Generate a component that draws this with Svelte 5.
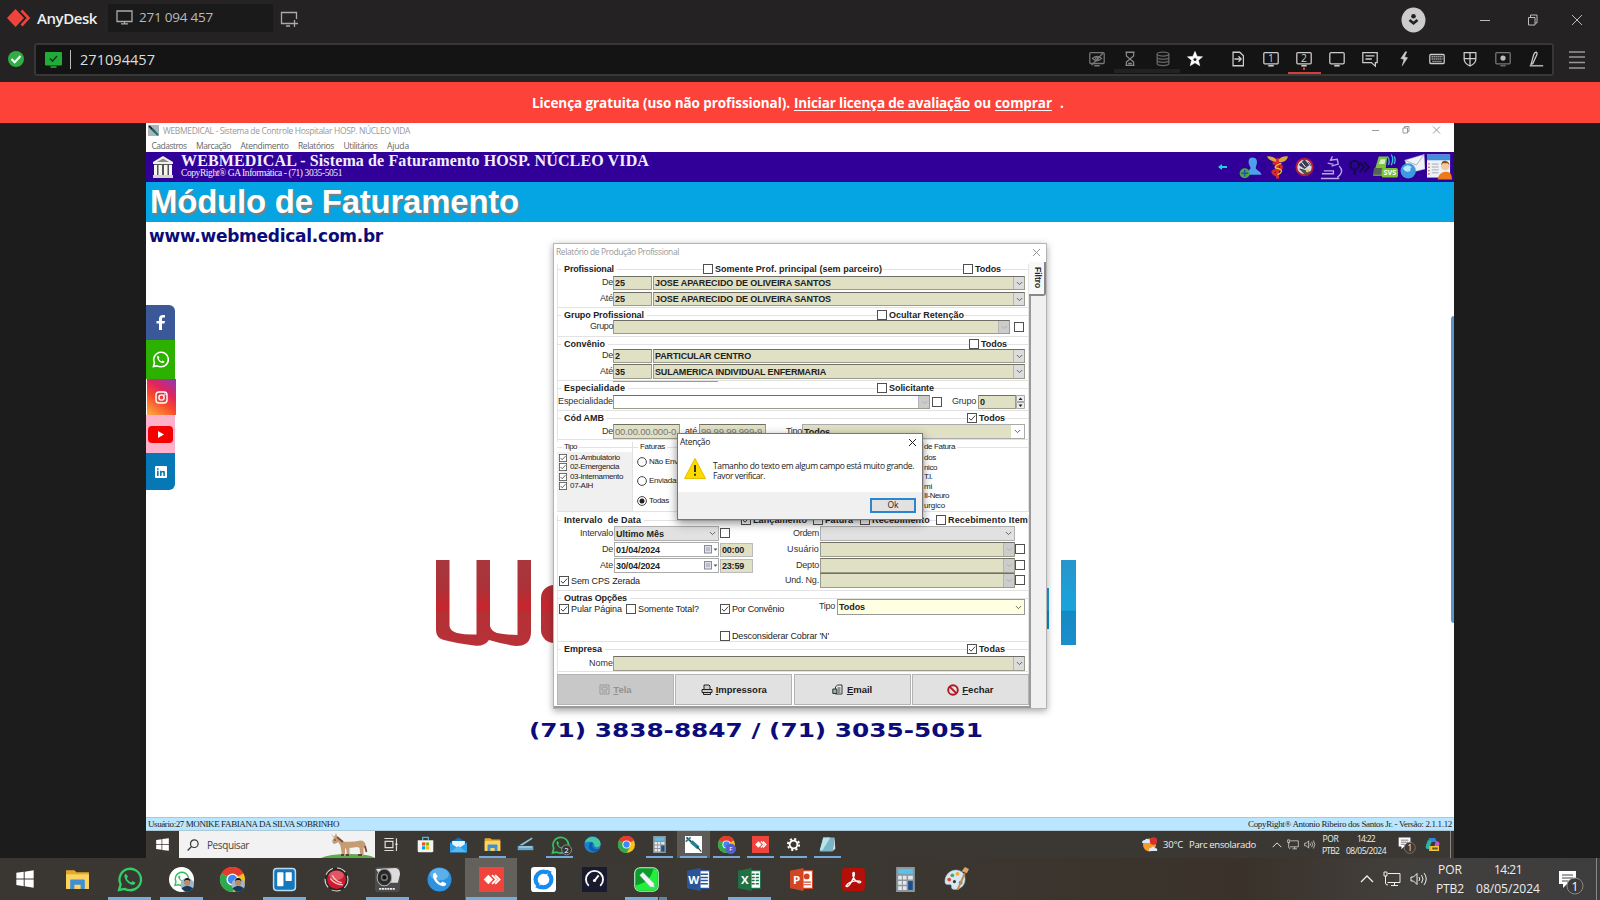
<script>
  // Spreads the letters of a label so that it takes the given width.
  function fit(node, width) {
    if (!width) return;
    const natural = node.getBoundingClientRect().width;
    const count = [...node.textContent].length;
    node.style.letterSpacing = `${(width - natural) / count}px`;
  }

  const menu = [
    ['Cadastros', 35], ['Marcação', 35], ['Atendimento', 48],
    ['Relatórios', 36], ['Utilitários', 34], ['Ajuda', 22]
  ];
  const toolsLeft = ['hidden', 'hourglass', 'disks', 'star'];
  const toolsRight = ['file', 'one', 'two', 'blank', 'chat', 'bolt', 'keyboard', 'shield', 'record', 'pen'];
  const remoteApps = [
    ['taskview', ''], ['store', ''], ['mail', ''], ['folder', 'run'], ['scanner', ''], ['whatsapp2', 'run'],
    ['edge', ''], ['chrome', ''], ['calc', 'run'], ['syringe', 'run active'], ['chromeF', 'run'],
    ['anydesk', 'run'], ['gear', 'run'], ['notes', 'run']
  ];
  const hostApps = [
    ['windows', ''], ['folder', ''], ['whatsapp', 'run'], ['waweb', 'run'], ['chromeP', ''], ['trello', 'run'],
    ['redball', ''], ['camera', 'run'], ['phone', ''], ['anydesk', 'run active'], ['sync', ''], ['gauge', ''],
    ['corel', 'run'], ['word', ''], ['excel', 'run'], ['ppt', ''], ['pdf', ''], ['calc', ''], ['paint', '']
  ];
  const tipos = [['01-Ambulatorio', 50], ['02-Emergencia', 49], ['03-Internamento', 53], ['07-AIH', 23]];
  const faturas = [['Não Enviadas', 47], ['Enviadas', 31], ['Todas', 20]];
  const faturaKinds = [['dos', 12], ['nico', 13], ['T.I.', 8], ['mi', 8], ['II-Neuro', 25], ['urgico', 21]];
</script>

{#snippet t(text, w = 0, cls = '')}<span class="t {cls}" use:fit={w}>{text}</span>{/snippet}

{#snippet box(on = false, cls = '')}
  <svg class="box {cls}" viewBox="0 0 10 10"><rect x=".5" y=".5" width="9" height="9" fill="#fff" stroke="#505050" />{#if on}<path d="M2 5l2 2.2L8.2 2.6" fill="none" stroke="#444" />{/if}</svg>
{/snippet}

{#snippet check(text, w, on = false, cls = '')}
  <span class="check {cls}">{@render box(on)}{@render t(text, w)}</span>
{/snippet}

{#snippet combo(text = '', w = 0, cls = '')}
  <div class="field combo {cls}">
    <span class="val">{#if text}{@render t(text, w)}{/if}</span>
    <span class="drop"><svg viewBox="0 0 8 5" width="7" height="5"><path d="M1 .8l3 3 3-3" fill="none" stroke="currentColor" /></svg></span>
  </div>
{/snippet}

{#snippet chromeMark()}
  <circle cx="12" cy="12" r="12" fill="#fbc116" />
  <path d="M12 12L1.600 6A12 12 0 0122.400 6z" fill="#e33b2e" />
  <path d="M1.600 6A12 12 0 0012 24l5.200-9L12 12z" fill="#2da94f" />
  <path d="M1.600 6A12 12 0 0122.400 6H12z" fill="#e33b2e" />
  <circle cx="12" cy="12" r="5.800" fill="#fff" /><circle cx="12" cy="12" r="4.500" fill="#4285f4" />
{/snippet}

{#snippet waMark(color)}
  <path d="M2 22l1.500-5.400A10.300 10.300 0 1112 22.300a10.300 10.300 0 01-4.800-1.300z" fill="none" stroke={color} stroke-width="2.200" />
  <path d="M8.500 6.500c-.8.3-1.700 1.500-1.300 3 .8 3.500 4 6.800 7.600 7.600 1.400.2 2.700-.8 2.800-2.200l-2.700-1.400-1.300 1.400c-2-.8-3.400-2.300-4.200-4.200l1.200-1.300z" fill={color} />
{/snippet}

{#snippet face()}
  <circle cx="17.500" cy="17" r="6.500" fill="#9fb7c8" /><path d="M12 20.500q5.500-5 11 0a6.500 6.500 0 01-11 0z" fill="#17395c" />
  <circle cx="17.500" cy="15" r="3" fill="#b98a6c" /><path d="M14.500 14q.2-3.500 3-3.500t3 3.500l-1.500-1.500h-3z" fill="#1d1714" />
{/snippet}

{#snippet app(name)}
  <svg class="ico" viewBox="0 0 24 24">
    {#if name === 'windows'}
      <path d="M4 6.300l6.800-1v6.200H4zM11.700 5.200L20 4v7.500h-8.300zM4 12.400h6.800v6.200l-6.800-1zM11.700 12.400H20V20l-8.300-1.200z" fill="#fff" />
    {:else if name === 'folder'}
      <path d="M1 3h8l2 2h12v16H1z" fill="#e9a825" /><path d="M1 7h22v14H1z" fill="#fcd462" /><path d="M5 21v-8q0-1 1-1h12q1 0 1 1v8h-4v-4H9v4z" fill="#3f8fd2" />
    {:else if name === 'whatsapp'}{@render waMark('#31d065')}
    {:else if name === 'whatsapp2'}
      <g transform="scale(1.080)">{@render waMark('#31c45f')}</g><circle cx="22" cy="19.500" r="7" fill="#3a3733" stroke="#aaa" /><text x="22" y="23.500" font-size="11" fill="#fff" text-anchor="middle">2</text>
    {:else if name === 'waweb'}
      <circle cx="12" cy="12" r="12" fill="#fff" /><g transform="translate(4.500 4) scale(.62)">{@render waMark('#2fbf57')}</g>{@render face()}
    {:else if name === 'chrome'}{@render chromeMark()}
    {:else if name === 'chromeP'}{@render chromeMark()}{@render face()}
    {:else if name === 'chromeF'}{@render chromeMark()}<circle cx="18" cy="18" r="7.500" fill="#5560c8" /><text x="18" y="21" font-size="8.500" fill="#fff" text-anchor="middle">F</text>
    {:else if name === 'trello'}
      <rect x="1.500" y="1.500" width="21" height="21" rx="3" fill="#1378bd" stroke="#b9dcf2" stroke-width="1.400" /><rect x="5" y="5" width="6" height="13.500" rx=".8" fill="#fff" /><rect x="13" y="5" width="6" height="8.500" rx=".8" fill="#fff" />
    {:else if name === 'redball'}
      <circle cx="12" cy="12" r="11" fill="#262424" stroke="#ddd" stroke-dasharray="9 4" /><circle cx="12" cy="12" r="9" fill="#cf1a2c" /><ellipse cx="12" cy="8" rx="7" ry="4.500" fill="#ee7f88" opacity=".6" /><path d="M6 11q5 6 12 6M8 8q3 6 9 7" fill="none" stroke="#f6c5ca" stroke-width="1.300" />
    {:else if name === 'camera'}
      <rect x="0" y="0" width="24" height="24" rx="3" fill="#4b4b4b" /><path d="M1 2L20 1q4 1 4 6l-2 8H9z" fill="#dcdcdc" /><ellipse cx="9" cy="10" rx="7" ry="8" fill="#2a2a2a" stroke="#aaa" /><circle cx="9" cy="10" r="3.500" fill="#777" /><circle cx="9" cy="10" r="2" fill="#111" /><path d="M4 21h15" stroke="#eee" stroke-width="1.600" stroke-dasharray="2 .6" />
    {:else if name === 'phone'}
      <circle cx="12" cy="12" r="11.500" fill="#2d93e0" /><ellipse cx="12" cy="7" rx="9" ry="6" fill="#79c1f1" opacity=".6" /><path d="M8 5.500c-1.500 0-2.500 1.600-2.300 3.200.8 5 4.800 9 9.800 9.700 1.500.1 3-1 3-2.600l-3.500-2-1.800 1.600c-2-.8-3.700-2.500-4.500-4.500L10.300 9z" fill="#fff" />
    {:else if name === 'anydesk'}
      <path d="M0 0h24v24H0z" fill="#ef443b" /><path d="M9 7.500l4.500 4.500L9 16.500 4.500 12z" fill="#fff" /><path d="M12.500 7.700l4.300 4.300-4.300 4.300M15.500 7.700l4.300 4.300-4.300 4.300" fill="none" stroke="#fff" stroke-width="1.700" />
    {:else if name === 'sync'}
      <rect width="24" height="24" rx="3" fill="#fff" /><circle cx="12" cy="12" r="7.600" fill="none" stroke="#168cf0" stroke-width="4" /><path d="M18.500 3.500L15 8M5.500 20.500L9 16" stroke="#fff" stroke-width="1.500" /><path d="M15 2.500l5 2-4 4zM9 21.500l-5-2 4-4z" fill="#168cf0" />
    {:else if name === 'gauge'}
      <path d="M0 0h24v24H0z" fill="#191a2e" /><path d="M6.500 18a8.200 8.200 0 1111 0M12 13l4-5" fill="none" stroke="#fff" stroke-width="1.800" /><circle cx="12" cy="13" r="1.500" fill="#fff" />
    {:else if name === 'corel'}
      <rect x=".7" y=".7" width="22.600" height="22.600" rx="5" fill="#0b9c2c" stroke="#c6f5cd" /><path d="M22.500 5v13q0 4.500-4.500 4.500H4q-2.500-1-2.500-5 14-2 17-15.500 4 0 4 3z" fill="#22ee3c" /><path d="M5.500 8l3-3L19 15.500l.5 4-4-.5z" fill="#f4f4f4" stroke="#9bb" stroke-width=".5" />
    {:else if name === 'word' || name === 'excel' || name === 'ppt'}
      {@const c = name === 'word' ? '#2a5699' : name === 'excel' ? '#207245' : '#d24625'}
      <path d="M11 3.500h11.500v17H11z" fill="#fff" stroke={c} />
      {#if name === 'word'}<path d="M14 7h7M14 10h7M14 13h7M14 16h7" stroke={c} stroke-width="1.400" />
      {:else if name === 'excel'}<path d="M14 7h3M18 7h3M14 10h3M18 10h3M14 13h3M18 13h3M14 16h3M18 16h3" stroke={c} stroke-width="1.500" />
      {:else}<circle cx="17" cy="9" r="2.800" fill={c} /><path d="M14 14.500h7M14 17h7" stroke={c} />{/if}
      <path d="M1 3.500L14 1v22L1 20.500z" fill={c} /><text x="7.400" y="16" font-size="11" font-weight="700" fill="#fff" text-anchor="middle">{name === 'word' ? 'W' : name === 'excel' ? 'X' : 'P'}</text>
    {:else if name === 'pdf'}
      <rect x="1" y="1" width="22" height="22" rx="3" fill="#b40f08" /><path d="M5 18c1.500-3 7-5.500 13-4.500 2 .6.500 2.200-1.200 1.600C13 13.500 11 9 11.400 6c.3-1.300 1.600-1 1.500.6C12.600 11 8.500 17.500 6.500 18.500 5.300 19 4.600 18.600 5 18z" fill="none" stroke="#fff" stroke-width="1.300" />
    {:else if name === 'calc'}
      <path d="M3 0h18v24H3z" fill="#8d969d" /><path d="M5 2h14v4.500H5z" fill="#58c2ea" /><path d="M5 8.500h3.500V12H5zM9.500 8.500H13V12H9.500zM14.500 8.500H19V12h-4.500zM5 13.500h3.500V17H5zM9.500 13.500H13V17H9.500zM5 18.500h3.500V22H5zM9.500 18.500H13V22H9.500z" fill="#e3e7ea" /><path d="M14.500 13.500H19V22h-4.500z" fill="#1a4f8f" />
    {:else if name === 'paint'}
      <path d="M1 15C0 8 6 2 13 3c6 1 8 6 7 11-1 6-8 9-12 7-1.500-1 0-3-1.500-4S2 18 1 15z" fill="#d6e6f2" stroke="#9fb9cb" stroke-width=".5" /><circle cx="5" cy="12" r="1.800" fill="#e0443a" /><circle cx="8" cy="8" r="1.800" fill="#4caf50" /><circle cx="13" cy="6.500" r="1.800" fill="#f2a93a" /><circle cx="10" cy="14" r="1.500" fill="#3a3733" /><circle cx="16" cy="15" r="1.800" fill="#4286d8" /><path d="M13 22L20 6" stroke="#c78a3e" stroke-width="1.800" /><path d="M17 4l3-4 4 2-2 4z" fill="#d9a468" />
    {:else if name === 'taskview'}
      <path d="M2 3.500h13M2 20.500h13M3 7.500h11v9H3zM19 3v8M19 14v7" fill="none" stroke="#ddd" stroke-width="1.700" /><circle cx="19" cy="12" r="1.600" fill="#fff" />
    {:else if name === 'store'}
      <path d="M8 6V2h8v4" fill="none" stroke="#45b4e8" stroke-width="1.800" /><path d="M1 6h22v15q0 2-2 2H3q-2 0-2-2z" fill="#f3f3f3" /><path d="M7 9h4.500v4.500H7z" fill="#f25022" /><path d="M12.500 9H17v4.500h-4.500z" fill="#7fba00" /><path d="M7 14.500h4.500V19H7z" fill="#00a4ef" /><path d="M12.500 14.500H17V19h-4.500z" fill="#ffb900" />
    {:else if name === 'mail'}
      <path d="M0 9l12-7 12 7v14H0z" fill="#0f6cbf" /><path d="M3 7h18v6l-9 6-9-6z" fill="#e9f5fd" /><path d="M0 9.500l12 8 12-8V23H0z" fill="#2ba0ea" /><path d="M0 23l12-9 12 9z" fill="#57b8f2" />
    {:else if name === 'scanner'}
      <path d="M3 13L21 2l1 2L8 13z" fill="#8fc7e0" /><path d="M1 14h22v6H1z" fill="#66a9c9" /><path d="M3 15.500h18" stroke="#e7f4fa" />
    {:else if name === 'edge'}
      <circle cx="12" cy="12" r="11.500" fill="#1b80d0" /><path d="M1 10C4-2 22-1 23.500 11c0 6-9 6-9 2 0-3-3-5-6-5-4 0-6.500 1-7.500 2z" fill="#43c9a4" /><path d="M9 9c-5 5-1 13 6 13q5-.5 7-4-8 2-10-3-1-3 1-5-2-2-4-1z" fill="#115da5" />
    {:else if name === 'syringe'}
      <path d="M0 0h24v24H0z" fill="#fff" /><path d="M2 2l10 9" stroke="#345" stroke-width="2.500" /><path d="M1 8l7-6" stroke="#29808f" stroke-width="2.600" /><path d="M9 8l10 9" stroke="#29808f" stroke-width="5" /><path d="M17 15l6 7" stroke="#244" stroke-width="1.600" />
    {:else if name === 'gear'}
      <circle cx="12" cy="12" r="5.500" fill="none" stroke="#fff" stroke-width="2.600" /><circle cx="12" cy="12" r="8" fill="none" stroke="#fff" stroke-width="2.600" stroke-dasharray="3.100 3.183" />
    {:else if name === 'notes'}
      <path d="M6 2h16l-3 20H1z" fill="#78b8c6" /><path d="M6 2h10L5 20H1z" fill="#b9e3ea" /><path d="M22 2l1 16-4 4z" fill="#d8dcdc" />
    {/if}
  </svg>
{/snippet}

{#snippet tool(name)}
  <svg class="tool" viewBox="0 0 20 20" fill="none" stroke="currentColor" stroke-width="1.400">
    {#if name === 'hidden'}
      <rect x="2" y="3" width="16" height="12" rx="1" /><path d="M7 17.500h6M4 17L17 3M5 9.500q5-5 10 0-5 5-10 0z" /><circle cx="10" cy="9.500" r="1.500" />
    {:else if name === 'hourglass'}
      <path d="M5 2.500h10M5 17h10M6 3v3.500l4 3.500 4-3.500V3M6 17v-3.500l4-3.500 4 3.500V17M8 15h4" />
    {:else if name === 'disks'}
      <ellipse cx="10" cy="4.500" rx="6.500" ry="2.200" /><path d="M3.500 4.500V15c0 3 13 3 13 0V4.500M3.500 8c0 3 13 3 13 0M3.500 11.500c0 3 13 3 13 0" />
    {:else if name === 'star'}
      <path d="M10 1.500l2.400 5.600 6 .5-4.600 3.900 1.500 5.900L10 14.200l-5.300 3.200 1.500-5.900L1.600 7.600l6-.5z" fill="currentColor" stroke-width=".6" /><path d="M10 8l.7 1.600 1.800.2-1.400 1.200.4 1.700-1.500-.9-1.500.9.400-1.700-1.400-1.200 1.800-.2z" fill="#141414" stroke="none" />
    {:else if name === 'file'}
      <path d="M4.500 2.500h7.500l4 4v11H4.500zM6 10h7M10.500 7l3 3-3 3" />
    {:else if name === 'one' || name === 'two'}
      <rect x="2" y="2.800" width="16" height="12.500" rx="1" /><path d="M7 17.500h6" stroke-width="1.800" /><text x="10" y="13.200" stroke="none" fill="currentColor" font-size="11.500" text-anchor="middle">{name === 'one' ? 1 : 2}</text>
      {#if name === 'two'}<circle cx="10" cy="20.800" r="1.300" fill="#ef443b" stroke="none" />{/if}
    {:else if name === 'blank'}
      <rect x="2" y="2.800" width="16" height="12.500" rx="1.500" /><path d="M7 17.500h6" stroke-width="1.800" />
    {:else if name === 'chat'}
      <path d="M2 2.800h16V14h-2v4l-4.500-4H2zM5 6.500h10M5 10h7" />
    {:else if name === 'bolt'}
      <path d="M11.500 2L6.500 9.500l3.500.8-2 7.200L14 8.500l-3.500-.8L13 2z" fill="currentColor" stroke-width=".6" />
    {:else if name === 'keyboard'}
      <rect x="2" y="5" width="16" height="10" rx="1" /><path d="M4 7.500h12M4 10h12M5 12.700h10" stroke-dasharray="1.300 .9" />
    {:else if name === 'shield'}
      <path d="M3.500 3h13v7q0 5-6.500 7.800Q3.500 15 3.500 10zM10 3v14.500M3.500 9.500h13" />
    {:else if name === 'record'}
      <rect x="2" y="2.800" width="16" height="12.500" rx="1" stroke="#777" /><path d="M7 17.500h6" stroke="#777" /><circle cx="10" cy="9" r="2.900" fill="#bbb" stroke="none" />
    {:else}
      <path d="M3 17.500h15" stroke-width="1.800" stroke="#aaa" /><path d="M4.500 16l3-11q1-2.500 2.500-2.500T11 5L6.500 15z" />
    {/if}
  </svg>
{/snippet}

{#snippet tray()}
  <svg class="chev" viewBox="0 0 14 8"><path d="M1 7l6-6 6 6" fill="none" stroke="#eee" stroke-width="1.300" /></svg>
  <svg class="net" viewBox="0 0 18 16" fill="none" stroke="#eee"><path d="M5 2.500h12v9H4.500M8 14.500h7M11.500 11.500v3M1 1h3v4H1zM2.500 5v7q0 2 2.500 2" /></svg>
  <svg class="vol" viewBox="0 0 18 14" fill="none" stroke="#eee"><path d="M1 5h2.500L7 1.500v11L3.500 9H1zM9 5q1.500 2 0 4M11.500 3q3 4 0 8M14 1q4.500 6 0 12" /></svg>
{/snippet}

{#snippet notif()}
  <svg class="notif" viewBox="0 0 26 26"><path d="M1 2h17v13H9l-4 4v-4H1z" fill="#fff" /><path d="M4 6h11M4 9h11M4 12h6" stroke="#444" /><circle cx="17" cy="17" r="8" fill="#3d3a38" stroke="#888" /><text x="17" y="21.500" font-size="12" fill="#fff" text-anchor="middle">1</text></svg>
{/snippet}

<div class="screen">
  <header class="titlebar">
    <svg class="logo" viewBox="0 0 24 18"><path d="M8.500 0l8.500 9-8.500 9L0 9z" fill="#ef443b" /><path d="M14.500 1.500L21.500 9l-7 7.500" fill="none" stroke="#ef443b" stroke-width="2.600" /></svg>
    <div class="brand">{@render t('AnyDesk', 60)}</div>
    <div class="tab">
      <svg width="17" height="15" viewBox="0 0 17 15" fill="none" stroke="#aaa" stroke-width="1.300"><path d="M1 1h15v10.500H1zM8.500 11v2.500M5 13.800h7" /></svg>
      {@render t('271 094 457', 74)}
    </div>
    <svg class="newtab" width="19" height="17" viewBox="0 0 19 17" fill="none" stroke="#aaa" stroke-width="1.300"><path d="M11 12.500H1.500V1.500h15V8M6 15h4M14.500 9v7M11 12.500h7" /></svg>
    <svg class="user" width="25" height="26" viewBox="0 0 25 26"><ellipse cx="12.500" cy="13" rx="12" ry="12.500" fill="#ccc" /><circle cx="12.500" cy="9.300" r="2.300" fill="#222" /><path d="M8.500 13l4 3.200 4-3.200" fill="none" stroke="#222" stroke-width="2.700" /></svg>
    <svg class="winbtns" width="104" height="14" viewBox="0 0 104 14" fill="none" stroke="#bbb"><path d="M1 7.500h10M49.500 4.500h6.500v7.500h-6.500zM51.500 4V2h6.500v8h-2M93 2l10 10M103 2L93 12" /></svg>
  </header>

  <div class="addressrow">
    <svg class="okdot" width="16" height="16" viewBox="0 0 16 16"><circle cx="8" cy="8" r="8" fill="#2fae43" /><path d="M3.500 8l3.200 3.200L12.500 5" fill="none" stroke="#fff" stroke-width="2" /></svg>
    <div class="address">
      <svg class="greenmon" width="17" height="16" viewBox="0 0 17 16"><rect width="17" height="13.500" rx="1" fill="#20ad37" /><path d="M5.500 15h6" stroke="#20ad37" stroke-width="1.600" /><path d="M5 6.500l2.500 2.700L12 4" fill="none" stroke="#10351a" stroke-width="1.500" /></svg>
      <i class="caret"></i>
      {@render t('271094457', 75)}
      <div class="tools">
        {#each toolsLeft as name}<span class="toolcell {name}">{@render tool(name)}</span>{/each}
        <i class="toolgap"></i>
        {#each toolsRight as name}<span class="toolcell {name}">{@render tool(name)}</span>{/each}
      </div>
    </div>
    <svg class="burger" width="16" height="18" viewBox="0 0 16 18" stroke="#999"><path d="M0 1h16M0 6h16M0 11.500h16M0 17h16" stroke-width="1.300" /></svg>
  </div>

  <div class="banner">
    {@render t('Licença gratuita (uso não profissional).', 258)}
    {@render t('Iniciar licença de avaliação', 176, 'link')}
    {@render t('ou', 17)}
    {@render t('comprar', 57, 'link')}
    <span class="dot">.</span>
  </div>

  <main class="stage">
    <div class="remote">
      <div class="apptitle">
        <svg width="11" height="11" viewBox="0 0 11 11"><path d="M0 0h11v11H0z" fill="#aab5b5" /><path d="M1 1l6 6" stroke="#223" stroke-width="2" /><path d="M4 4l6 6" stroke="#1c6c78" stroke-width="2" /></svg>
        {@render t('WEBMEDICAL - Sistema de Controle Hospitalar HOSP. NÚCLEO VIDA', 247)}
        <svg class="appbtns" width="70" height="10" viewBox="0 0 70 10" fill="none" stroke="#999"><path d="M1 5.500h7M32 3h4.500v5H32zM33.500 3V1.500H38v5h-1.500M62 1.500l7 7M69 1.500l-7 7" /></svg>
      </div>
      <nav class="menubar">{#each menu as [label, w]}{@render t(label, w)}{/each}</nav>
      <div class="purple">
        <svg class="temple" width="22" height="23" viewBox="0 0 22 23"><path d="M11 0L1 6v2h20V6z" fill="#f0f0ea" /><path d="M5 6h12L11 2.500z" fill="#8c8c84" /><path d="M2 8h18v11H2z" fill="#55555a" /><path d="M2 9h3v10H2zM6.500 9h3.500v10H6.500zM12 9h3.500v10H12zM17 9h3v10h-3z" fill="#f6f6ef" /><path d="M1 19h20v3H1z" fill="#d5d5cd" /></svg>
        <div class="ptext">
          <div class="pt1">{@render t('WEBMEDICAL - Sistema de Faturamento HOSP. NÚCLEO VIDA', 468)}</div>
          <div class="pt2">{@render t('CopyRight® GA Informática - (71) 3035-5051', 161)}</div>
        </div>
        <div class="picons">
          <svg class="arrow" viewBox="0 0 10 8"><path d="M0 4l4-3v2h5v2H4v2z" fill="#20d0d8" /></svg>
          <svg viewBox="0 0 26 26"><path d="M15 3c4 0 5.500 3 4.500 7-.5 2-1 3-1 4 0 2 5 3 6 7H8c1-4 5-5 5-7 0-2-2-3-2-6S12 3 15 3z" fill="#4fa0ea" /><circle cx="7" cy="19.500" r="5.300" fill="#4aa84a" /><path d="M7 16v7M3.500 19.500h7" stroke="#2550b0" stroke-width="1.600" /></svg>
          <svg viewBox="0 0 26 26"><path d="M2 2q6-1 11 4 5-5 11-4-2 7-11 6T2 2z" fill="#d9a93a" /><path d="M13 4v21" stroke="#e0302c" stroke-width="3" /><path d="M8 9q10 1 9 5-1 2-8 3-3 2 4 5" fill="none" stroke="#d42a2a" stroke-width="3" /><path d="M17 9q-8 3-6 5 7 1 6 4-1 2-4 3" fill="none" stroke="#e9c23c" stroke-width="1.400" /></svg>
          <svg viewBox="0 0 26 26"><circle cx="13" cy="13" r="8.500" fill="#d8d8e4" stroke="#b01c3c" stroke-width="2" /><path d="M13 5l5 6-5 4-6-4z" fill="#3b3b52" /><path d="M8 15l10 3-4 3zM17 8l3 4" stroke="#3b3b52" fill="#555" /><path d="M10 8l4 5" stroke="#fff" /><circle cx="16" cy="17" r="1.700" fill="#e3c944" /></svg>
          <svg viewBox="0 0 26 26" fill="none" stroke="#b8a8e8" stroke-width="1.400"><path d="M14 2l-2 4 7-1 1 5-7 2M9 9q5 1 6 1M21 12q6 6-2 12M3 20h12v-3H5M2 25h19" /></svg>
          <svg viewBox="0 0 26 26" fill="none" stroke="#130848" stroke-width="2"><circle cx="9" cy="11" r="4.500" /><path d="M9 16v5M14 8l5 5-5 5M19 8l5 5-5 5" /></svg>
          <svg viewBox="0 0 26 26"><path d="M6 2h9l-3 20H0z" fill="#7cc142" /><path d="M8 5h5l-1 5H6z" fill="#d7efc0" /><path d="M1 14h9l-1 7H0z" fill="#56615a" /><path d="M16 11q2-5-1-9M19 11q3-6 0-11M22 10q2-5 0-8" fill="none" stroke="#3eb5dd" stroke-width="1.400" /><rect x="9" y="14" width="17" height="10" rx="2" fill="#7ac52c" /><text x="17.500" y="21.700" font-size="7.500" font-weight="700" fill="#fff" text-anchor="middle">SVS</text></svg>
          <svg viewBox="0 0 26 26"><path d="M5 6L25 0l1 15-16 4z" fill="#f0f2f7" stroke="#b8bcc9" stroke-width=".6" /><path d="M5 6l12 5 8-11" fill="none" stroke="#a9b0c0" /><circle cx="8.500" cy="17" r="8" fill="#3b9be3" /><path d="M3 14q5-5 9-1-2 2-1 4-5 3-8-3z" fill="#b9e4fb" /></svg>
          <svg viewBox="0 0 26 26"><path d="M0 0h24v24H0z" fill="#eef1f6" /><path d="M0 0h24v6H0z" fill="#3f8fdb" /><path d="M5 10h7M5 13h7M5 16h7M5 19h7" stroke="#a4aab5" /><path d="M2 9v12" stroke="#dd5550" stroke-dasharray="1.500 2" stroke-width="1.500" /><circle cx="19" cy="12" r="4.500" fill="#f2c9a2" /><path d="M14.500 11q1-5 4.500-4.500t4.500 4.500l-2-2h-5z" fill="#8a4d20" /><path d="M11 26q1-7 8-8t7 8z" fill="#ec7a1d" /></svg>
        </div>
      </div>
      <div class="blue">{@render t('Módulo de Faturamento', 369)}</div>

      <section class="desktop">
        <div class="site">{@render t('www.webmedical.com.br', 234)}</div>
        <svg class="biglogo" width="660" height="90" viewBox="0 0 660 90">
          <defs>
            <linearGradient id="red" x1="0" y1="0" x2="0" y2="86" gradientUnits="userSpaceOnUse"><stop offset="0" stop-color="#a8373c" /><stop offset=".3" stop-color="#ab3238" /><stop offset=".58" stop-color="#c9242e" /><stop offset=".6" stop-color="#b33035" /><stop offset="1" stop-color="#b83238" /></linearGradient>
            <linearGradient id="cyan" x1="0" y1="0" x2="0" y2="86" gradientUnits="userSpaceOnUse"><stop offset="0" stop-color="#2795cb" /><stop offset=".58" stop-color="#1aa3de" /><stop offset=".6" stop-color="#1489c3" /><stop offset="1" stop-color="#1a8fcc" /></linearGradient>
          </defs>
          <path d="M0 0H13.500V66Q14 71 21 73 30 75 40.500 74.500V0H54V66Q55 71 61 73 70 75 81.500 75V0H95V72Q95 86 80 86 66 84 53 80 48 87 38 85.500 20 83 8 80 0 78 0 70Z" fill="url(#red)" />
          <rect x="105" y="25" width="50" height="58" rx="13" fill="url(#red)" />
          <path d="M590 28h23v41h-23zM625 0h15v85h-15z" fill="url(#cyan)" />
        </svg>
        <div class="phones"><span>(71) 3838-8847 / (71) 3035-5051</span></div>
        <i class="sideglow"></i>

        <div class="social">
          <span class="fb"><svg width="10" height="15" viewBox="0 0 10 15"><path d="M3 15V8.500H.5V6H3V4q0-4 4-4h2v2.600H7.500Q6 2.600 6 4v2h3l-.5 2.500H6V15z" fill="#fff" /></svg></span>
          <span class="wa"><svg width="17" height="17" viewBox="0 0 24 24">{@render waMark('#fff')}</svg></span>
          <span class="ig"><svg width="13" height="13" viewBox="0 0 13 13" fill="none" stroke="#fff" stroke-width="1.400"><rect x="1" y="1" width="11" height="11" rx="3" /><circle cx="6.500" cy="6.500" r="2.600" /><circle cx="9.700" cy="3.400" r=".3" /></svg></span>
          <span class="yt"><svg width="25" height="17" viewBox="0 0 25 17"><rect width="25" height="17" rx="4" fill="#f50000" /><path d="M10 5l6 3.500-6 3.500z" fill="#fff" /></svg></span>
          <span class="li"><svg width="12" height="12" viewBox="0 0 12 12"><rect width="12" height="12" rx="1" fill="#fff" /><path d="M2 4.700h1.600V10H2zM2 2.200h1.600v1.500H2zM5 4.700h1.500v.8q1.700-1.700 3.400 0V10H8.300V6.800q-.8-1.200-1.700 0V10H5z" fill="#0877b5" /></svg></span>
        </div>

        <div class="dialog">
          <div class="dtitle">{@render t('Relatório de Produção Profissional', 123)}<svg width="9" height="9" viewBox="0 0 9 9" stroke="#999"><path d="M1 1l7 7M8 1L1 8" /></svg></div>
          <div class="dmain">
            <div class="form">
              <div class="group g1">
                <div class="head"><b>{@render t('Profissional', 50)}</b>{@render check('Somente Prof. principal (sem parceiro)', 167, false, 'bold h1a')}{@render check('Todos', 26, false, 'bold h1b')}</div>
                <div class="row two">{@render t('De', 11)}<div class="field">{@render t('25', 10)}</div>{@render combo('JOSE APARECIDO DE OLIVEIRA SANTOS', 176)}</div>
                <div class="row two">{@render t('Até', 13)}<div class="field">{@render t('25', 10)}</div>{@render combo('JOSE APARECIDO DE OLIVEIRA SANTOS', 176)}</div>
              </div>
              <div class="group g2">
                <div class="head"><b>{@render t('Grupo Profissional', 80)}</b>{@render check('Ocultar Retenção', 75, false, 'bold h2')}</div>
                <div class="row grupo">{@render t('Grupo', 23)}{@render combo('', 0, 'off')}{@render box()}</div>
              </div>
              <div class="group g3">
                <div class="head"><b>{@render t('Convênio', 41)}</b>{@render check('Todos', 26, false, 'bold h3')}</div>
                <div class="row two">{@render t('De', 11)}<div class="field">{@render t('2', 5)}</div>{@render combo('PARTICULAR CENTRO', 96)}</div>
                <div class="row two">{@render t('Até', 13)}<div class="field">{@render t('35', 10)}</div>{@render combo('SULAMERICA INDIVIDUAL ENFERMARIA', 171)}</div>
                <i class="stub"></i>
              </div>
              <div class="group g4">
                <div class="head"><b>{@render t('Especialidade', 61)}</b>{@render check('Solicitante', 45, false, 'bold h4')}</div>
                <div class="row esp">{@render t('Especialidade', 55)}{@render combo('', 0, 'white off')}{@render box()}{@render t('Grupo', 24, 'gl')}<div class="field">{@render t('0', 5)}</div><svg class="spin" viewBox="0 0 9 14"><path d="M.5.5h8v6h-8zM.5 7.500h8v6h-8z" fill="#eee" stroke="#aaa" /><path d="M2.500 5l2-2.500 2 2.500zM2.500 9.500l2 2.500 2-2.500z" fill="#222" /></svg></div>
              </div>
              <div class="group g5">
                <div class="head"><b>{@render t('Cód AMB', 40)}</b>{@render check('Todos', 26, true, 'bold h5')}</div>
                <div class="row amb">{@render t('De', 11)}<div class="field mask">{@render t('00.00.00.000-0', 61)}</div>{@render t('até', 12)}<div class="field mask">{@render t('99.99.99.999-9', 61)}</div>{@render t('Tipo', 16)}{@render combo('Todos', 26, 'flat')}</div>
              </div>
              <div class="g6">
                <div class="sub tipo">
                  <div class="subhead"><span>{@render t('Tipo', 13)}</span></div>
                  <div class="list">{#each tipos as [label, w]}{@render check(label, w, true, 'small')}{/each}</div>
                </div>
                <div class="sub fat">
                  <div class="subhead"><span>{@render t('Faturas', 25)}</span></div>
                  {#each faturas as [label, w], i}
                    <span class="radio"><svg width="10" height="10" viewBox="0 0 10 10"><circle cx="5" cy="5" r="4.400" fill="#fff" stroke="#444" />{#if i === 2}<circle cx="5" cy="5" r="2.500" fill="#222" />{/if}</svg>{@render t(label, w)}</span>
                  {/each}
                </div>
                <div class="sub kinds">
                  <div class="subhead"><span>{@render t('de Fatura', 31)}</span></div>
                  {#each faturaKinds as [label, w]}<span class="kind">{@render t(label, w)}</span>{/each}
                </div>
              </div>
              <div class="group g7">
                <div class="head"><b>{@render t('Intervalo  de Data', 77)}</b>{@render check('Lançamento', 54, true, 'bold h7a')}{@render check('Fatura', 28, false, 'bold h7b')}{@render check('Recebimento', 58, false, 'bold h7c')}{@render check('Recebimento Item', 80, false, 'bold h7d')}</div>
                <div class="cols">
                  <div class="left">
                    <div class="row int">{@render t('Intervalo', 33)}{@render combo('Ultimo Mês', 48, 'grey')}{@render box()}</div>
                    {#each [['De', '01/04/2024', '00:00', 11], ['Ate', '30/04/2024', '23:59', 13]] as [label, date, time, w]}
                      <div class="row date">{@render t(label, w)}<div class="field white">{@render t(date, 44)}<svg width="14" height="9" viewBox="0 0 14 9"><rect x=".5" y=".5" width="7" height="7.500" fill="#dfe3e8" stroke="#889" /><path d="M2 3h4M2 5h4" stroke="#99a" /><path d="M9.500 3.500h4l-2 2.300z" fill="#555" /></svg></div><div class="field time">{@render t(time, 22)}</div></div>
                    {/each}
                    {@render check('Sem CPS Zerada', 69, true, 'cps')}
                  </div>
                  <div class="right">
                    <div class="row ord">{@render t('Ordem', 26)}{@render combo('', 0, 'grey')}</div>
                    {#each [['Usuário', 32], ['Depto', 23], ['Und. Ng.', 34]] as [label, w]}
                      <div class="row ord">{@render t(label, w)}{@render combo('', 0, 'off')}{@render box()}</div>
                    {/each}
                  </div>
                </div>
              </div>
              <div class="group g8">
                <div class="head"><b>{@render t('Outras Opções', 63)}</b></div>
                <div class="row opts">{@render check('Pular Página', 51, true)}{@render check('Somente Total?', 61)}{@render check('Por Convênio', 52, true)}{@render t('Tipo', 16)}{@render combo('Todos', 26, 'cream')}</div>
                {@render check("Desconsiderar Cobrar 'N'", 97, false, 'descon')}
              </div>
              <div class="group g9">
                <div class="head"><b>{@render t('Empresa', 38)}</b>{@render check('Todas', 26, true, 'bold h9')}</div>
                <div class="row nome">{@render t('Nome', 24)}{@render combo()}</div>
              </div>
              <div class="buttons">
                <button class="dis"><svg width="11" height="11" viewBox="0 0 11 11" fill="none" stroke="#999"><path d="M1 1h9v9H1zM3 3h5v3H3zM3 8h5" /></svg><span><u>T</u>ela</span></button>
                <button><svg width="12" height="11" viewBox="0 0 12 11" fill="#ccc" stroke="#222"><path d="M3 5V1h5l1 1v3M1 5.500h10v3H1zM2.500 8.500h7v2h-7z" /></svg><span><u>I</u>mpressora</span></button>
                <button><svg width="12" height="11" viewBox="0 0 12 11" fill="#eee" stroke="#333"><path d="M3.500 3l2-2H10v9H3.500zM5.500 4h3M5.500 6h3M5.500 8h3" /><path d="M.8 5h4v4.500h-4z" fill="#7bb9b5" /></svg><span><u>E</u>mail</span></button>
                <button><svg width="12" height="12" viewBox="0 0 12 12" fill="none" stroke="#b01824" stroke-width="1.900"><circle cx="6" cy="6" r="4.800" /><path d="M2.600 2.600l6.800 6.800" /></svg><span><u>F</u>echar</span></button>
              </div>
            </div>
            <aside class="tabs"><div class="vtab"><span>Filtro</span></div></aside>
          </div>
        </div>

        <div class="alert">
          <div class="atitle">{@render t('Atenção', 30)}<svg width="9" height="9" viewBox="0 0 9 9" stroke="#222"><path d="M1 1l7 7M8 1L1 8" /></svg></div>
          <div class="abody">
            <svg width="22" height="21" viewBox="0 0 22 21"><path d="M11 .5L21.500 20.500H.5z" fill="#fcd900" stroke="#e8bc00" stroke-linejoin="round" /><path d="M11 7v7M11 15.800v2" stroke="#222" stroke-width="1.800" /></svg>
            <div>{@render t('Tamanho do texto em algum campo está muito grande.', 201)}<br />{@render t('Favor verificar.', 52)}</div>
          </div>
          <div class="afoot"><button class="ok">Ok</button></div>
        </div>
      </section>

      <div class="status">{@render t('Usuário:27 MONIKE FABIANA DA SILVA SOBRINHO', 191)}{@render t('CopyRight® Antonio Ribeiro dos Santos Jr. - Versão: 2.1.1.12', 204)}</div>

      <div class="rtask">
        <div class="rstart">{@render app('windows')}</div>
        <div class="search">
          <svg width="12" height="12" viewBox="0 0 12 12" fill="none" stroke="#333" stroke-width="1.200"><circle cx="7.300" cy="4.700" r="3.800" /><path d="M4.500 7.500L.7 11.500" /></svg>
          {@render t('Pesquisar', 42)}
          <svg class="donkey" width="54" height="26" viewBox="0 0 54 26"><path d="M0 26q8-4 28-4t26 4z" fill="#5fa94e" /><path d="M10 2l3 4 2-5 1.500 4.500 5 4q9 1 18-1 4 0 5 4l1 8-1.500-4-1.500-1v8.500h-3l-1-8-2-1-8 1v8h-2.500l-.8-7-1.200-1v8h-3l-1.500-10-2-4-4 2q-3-1-2-4l2-3z" fill="#c69c74" /><path d="M16 5l6 5M44 14l1.500 6" stroke="#7b4a38" stroke-width="1.800" /><path d="M20 23h3M25 23h3M37 23h4" stroke="#5d4038" stroke-width="1.800" /><circle cx="14" cy="8" r=".7" fill="#222" /></svg>
        </div>
        <div class="rapps">{#each remoteApps as [name, cls]}<span class="rapp {cls}">{@render app(name)}</span>{/each}</div>
        <div class="rtray">
          <svg class="weather" width="17" height="16" viewBox="0 0 17 16"><circle cx="8.500" cy="8" r="6.500" fill="#f49a2c" /><path d="M1 6q0-3 3-3 1-2 3-1 3 1 2 4H3q-2 0-2 0zM8 14q-1-3 2-3 2-3 4 0 3 0 2 3z" fill="#dbe9f8" /><circle cx="12.500" cy="4" r="3.700" fill="#d6312f" /></svg>
          {@render t('30°C', 20)}<span class="parc">{@render t('Parc ensolarado', 67)}</span>
          <div class="tray">{@render tray()}</div>
          <div class="two-lines lang">{@render t('POR', 16)}{@render t('PTB2', 17)}</div>
          <div class="two-lines date">{@render t('14:22', 18)}{@render t('08/05/2024', 40)}</div>
          <div class="rnotif">{@render notif()}</div>
          <svg class="copilot" width="15" height="15" viewBox="0 0 15 15"><path d="M4 1h6l2 4H3z" fill="#2c86dd" /><path d="M3 3l4 1-3 8H2Q0 11 1 8z" fill="#2bb3a5" /><path d="M11 4l3 1q1 2 0 4l-2 4H8z" fill="#c659c9" /><path d="M4 9h5l-2 5H4z" fill="#f0a832" /><path d="M6 9h8v5H6z" fill="#f2c93c" /><path d="M7.500 11.500h5" stroke="#222" stroke-dasharray="1.300 .6" stroke-width="2" /></svg>
          <i class="edge"></i>
        </div>
      </div>
    </div>
  </main>

  <footer class="htask">
    <div class="happs">{#each hostApps as [name, cls]}<span class="happ {cls} {name}">{@render app(name)}</span>{/each}</div>
    <div class="htray">
      <div class="tray">{@render tray()}</div>
      <div class="two-lines lang">{@render t('POR', 24)}{@render t('PTB2', 28)}</div>
      <div class="two-lines date">{@render t('14:21', 28)}{@render t('08/05/2024', 64)}</div>
      <div class="hnotif">{@render notif()}</div>
      <i class="edge"></i>
    </div>
  </footer>
</div>

<style>
  :global(body) { background: #1c1c1c; overflow: hidden; }
  * { box-sizing: border-box; }
  svg { display: block; flex: none; }
  i { display: block; }
  .t { display: inline-block; white-space: pre; flex: none; }
  .screen { width: 1600px; height: 900px; display: flex; flex-direction: column; background: #1c1c1c; font-family: "Open Sans", "Noto Sans", sans-serif; }

  .titlebar { height: 39px; background: #242222; display: flex; align-items: center; padding: 0 16px 0 7px; flex: none; }
  .logo { width: 24px; height: 18px; margin-top: -3px; }
  .brand { margin: -3px 0 0 6px; width: 65px; font-size: 15px; font-weight: 600; color: #eee; }
  .tab { margin-left: 6px; align-self: flex-start; margin-top: 4px; width: 165px; height: 28px; background: #1b1a1a; color: #b9b9b9; font-size: 13.500px; display: flex; align-items: center; gap: 6px; padding: 0 0 2px 8px; }
  .newtab { margin-left: 7px; }
  .user { margin-left: auto; }
  .winbtns { margin-left: 53px; margin-right: 1px; }

  .addressrow { height: 43px; background: #242222; display: flex; align-items: flex-start; flex: none; padding: 4px 0 0 8px; }
  .okdot { margin-top: 8px; }
  .address { margin-left: 10px; width: 1520px; height: 33px; border: 2px solid #383737; border-radius: 3px; background: #141414; display: flex; align-items: center; color: #ddd; font-size: 14.500px; padding-left: 9px; }
  .caret { width: 1px; height: 19px; background: #bbb; margin: 0 9px 0 8px; }
  .tools { margin-left: auto; display: flex; height: 29px; color: #ccc; margin-right: -1px; }
  .toolcell { width: 33.200px; display: flex; justify-content: center; padding-top: 5px; }
  .tool { width: 18px; height: 18px; overflow: visible; }
  .toolcell.hidden { color: #777; }
  .toolcell.hourglass, .toolcell.disks { color: #666; border-bottom: 4px solid #222; height: 28px; }
  .toolcell.hourglass { color: #888; }
  .toolcell.star { color: #fff; padding-right: 4px; }
  .toolcell.two { box-shadow: inset 0 -2px 0 #cf403a; }
  .toolgap { width: 8px; }
  .burger { margin: 8px 0 0 15px; }

  .banner { height: 41px; background: #fd4239; color: #fff; font-size: 13.500px; font-weight: 700; display: flex; align-items: center; gap: 4px; padding: 1px 0 0 532px; flex: none; }
  .banner :global(.link) { text-decoration: underline; text-underline-offset: 1.500px; }
  .dot { margin-left: 4px; }

  .stage { height: 735px; display: flex; justify-content: center; flex: none; }
  .remote { width: 1308px; display: flex; flex-direction: column; background: #fff; }
  .apptitle { height: 15px; display: flex; align-items: center; gap: 5px; padding: 0 13px 1px 2px; font-size: 8.500px; color: #999; flex: none; }
  .apptitle .t { margin-left: -1px; }
  .appbtns { margin-left: auto; }
  .menubar { height: 14px; display: flex; align-items: center; gap: 9.500px; padding-left: 5.500px; font-size: 8.500px; color: #666; flex: none; }
  .purple { height: 30px; background: #300099; display: flex; align-items: center; padding-left: 6px; flex: none; }
  .ptext { margin: -2px 0 0 7px; color: #f2eefc; font-family: "Liberation Serif", serif; }
  .pt1 { font-size: 16px; font-weight: 700; line-height: 15px; }
  .pt2 { font-size: 9.500px; line-height: 11px; }
  .picons { margin-left: auto; display: flex; align-items: center; gap: 2px; margin-right: 2px; }
  .picons svg { width: 25px; height: 26px; }
  .picons svg.arrow { width: 10px; height: 8px; margin-right: 8px; }
  .blue { height: 40px; background: #05a5e4; flex: none; padding-left: 4px; font: 700 33px/39px "Liberation Sans", sans-serif; color: #fff; text-shadow: 1.500px 1.500px 1px #7c8084; }

  .desktop { position: relative; height: 595px; flex: none; display: flex; flex-direction: column; background: #fff; }
  .site { padding-left: 3px; height: 28px; font: 700 17px/29px "DejaVu Sans", sans-serif; color: #0b0b7a; }
  .biglogo { margin: 310px 0 0 290px; }
  .phones { margin: 68px 0 0 383px; font: 700 20px/24px "DejaVu Sans", sans-serif; color: #0b0b7a; }
  .phones span { display: inline-block; white-space: pre; transform: scaleX(1.238); transform-origin: 0 50%; }
  .sideglow { position: absolute; right: 0; top: 94px; width: 3px; height: 307px; border-radius: 3px 0 0 3px; background: #5b95cf; }

  .social { position: absolute; left: 0; top: 83px; width: 29px; display: flex; flex-direction: column; }
  .social span { display: flex; align-items: center; justify-content: center; }
  .fb { height: 35px; background: #3b5998; border-top-right-radius: 6px; }
  .wa { height: 39px; background: #2db100; }
  .ig { height: 36px; background: linear-gradient(35deg, #fdb040 0%, #fa4a2a 40%, #e0245e 65%, #8a3ab9 100%); margin: 0 -1px 0 1px; }
  .yt { height: 38px; background: #ffb0cb; }
  .li { height: 37px; background: #0877b5; border-bottom-right-radius: 6px; }

  .dialog { position: absolute; left: 407px; top: 21px; width: 494px; height: 466px; background: #fff; border: 1px solid #b5b5b5; box-shadow: 0 2px 7px rgba(0, 0, 0, .35); display: flex; flex-direction: column; font-family: "Liberation Sans", sans-serif; font-size: 9px; line-height: 10px; color: #222; }
  .dtitle { height: 18px; display: flex; align-items: center; justify-content: space-between; padding: 0 5px 2px 2px; font: 8.500px/16px "Open Sans", sans-serif; color: #999; }
  .dmain { display: flex; flex: 1; }
  .form { width: 477px; padding: 2px 0 0 3px; border-right: 2px solid #9a9a9a; border-bottom: 2px solid #9a9a9a; display: flex; flex-direction: column; }
  .tabs { flex: 1; background: #f0f0f0; }
  .vtab { height: 34px; background: #f8f8f8; border: 1px solid #888; border-width: 0 2px 2px 0; margin-left: -2px; display: flex; align-items: center; justify-content: center; border-radius: 0 0 3px 0; padding-left: 2px; }
  .vtab span { writing-mode: vertical-rl; font-size: 8.500px; font-weight: 700; }

  .group { flex: none; width: 472px; display: flex; flex-direction: column; box-shadow: inset -1px 0 #e6e6e6, inset 1px 0 #e6e6e6; background: linear-gradient(#e2e2e2, #e2e2e2) 0 calc(100% - 2px) / 100% 1px no-repeat; }
  .g1 { height: 46px; } .g2 { height: 29px; } .g3 { height: 44px; } .g4 { height: 30px; } .g5 { height: 29px; }
  .g7 { height: 78px; } .g8 { height: 51px; } .g9 { height: 30px; }
  .head { height: 10px; flex: none; display: flex; align-items: center; padding-left: 4px; background: linear-gradient(#e2e2e2, #e2e2e2) 0 5px / 100% 1px no-repeat; }
  .head b { background: #fff; padding: 0 3px; }
  .check { display: flex; align-items: center; gap: 2px; background: #fff; flex: none; width: max-content; }
  .check.bold { font-weight: 700; }
  .box { width: 10px; height: 10px; }
  .h1a { margin-left: 86px; } .h1b { margin-left: auto; margin-right: 28px; }
  .h2 { margin-left: auto; margin-right: 65px; }
  .h3 { margin-left: auto; margin-right: 22px; }
  .h4 { margin-left: auto; margin-right: 95px; }
  .h5 { margin-left: auto; margin-right: 24px; }
  .h9 { margin-left: auto; margin-right: 24px; }
  .h7a { margin-left: auto; } .h7b { margin-left: 6px; } .h7c { margin-left: 7px; } .h7d { margin-left: 6px; margin-right: 1px; }

  .row { display: grid; height: 14px; align-items: center; flex: none; }
  .row > .t { justify-self: end; position: relative; top: -1px; color: #333; }
  .field { height: 100%; background: #e0e0c5; border: 1px solid #9b9b8c; border-top-color: #6f6f66; display: flex; align-items: center; padding-left: 1px; font-weight: 700; min-width: 0; overflow: hidden; }
  .combo { padding: 0; }
  .val { flex: 1; padding-left: 1px; display: flex; }
  .drop { width: 11px; height: 100%; display: flex; align-items: center; justify-content: center; background: #dcdcdc; border-left: 1px solid #b5b5b5; color: #555; }
  .off .drop { background: #ccc; color: #aaa; }
  .white { background: #fff; }
  .grey { background: #e1e1e1; border-color: #b0b0b0; }
  .grey .drop, .flat .drop, .cream .drop { background: transparent; border: 0; }
  .flat { border-color: #aaa; } .flat .drop { background: #fff; width: 13px; }
  .cream { background: #ffffe1; border-color: #999; }
  .two { grid-template-columns: 56px 39px 373px; }
  .two .combo { margin-left: 1px; }
  .g1 .row { margin-top: 2px; }
  .g3 .row + .row { margin-top: 1px; height: 15px; }
  .stub { width: 105px; height: 1px; margin: 2px 0 0 56px; background: #999; }
  .grupo { grid-template-columns: 56px 397px 14px; } .grupo .box { margin-left: 4px; }
  .g4 .row { margin-top: 2px; }
  .esp { grid-template-columns: 56px 317px 12px 34px 2px 38px 9px; }
  .esp .box { margin-left: 2px; }
  .esp > .field:nth-of-type(2) { grid-column: 6; } .spin { width: 9px; height: 14px; }
  .g5 .row { margin-top: 1px; height: 15px; }
  .amb { grid-template-columns: 56px 67px 17px 2px 67px 36px 223px; }
  .amb .field:nth-of-type(2) { grid-column: 5; }
  .mask { font-weight: 400; color: #777; font-size: 9.500px; }

  .g6 { height: 73px; flex: none; display: flex; font-size: 8px; }
  .sub { display: flex; flex-direction: column; height: 70px; border-right: 1px solid #e2e2e2; border-bottom: 1px solid #e2e2e2; }
  .subhead { height: 10px; display: flex; background: linear-gradient(#e2e2e2, #e2e2e2) 0 5px / 100% 1px no-repeat; padding-left: 5px; flex: none; }
  .subhead span { background: #fff; }
  .subhead > span { padding: 0 2px; }
  .tipo { width: 76px; } .list { background: #f0f0f0; flex: 1; padding: 1px 0 0 2px; }
  .list .check { height: 9.500px; background: none; } .list .box { width: 8px; height: 8px; } .list .check.small { gap: 3px; }
  .fat { width: 291px; } .radio { display: flex; align-items: center; gap: 2px; margin-left: 4px; height: 19.500px; }
  .kinds { width: 105px; } .kinds .subhead { padding-left: 0; margin-bottom: 1px; } .kinds .subhead > span { padding-left: 0; } .kind { height: 9.500px; }

  .cols { display: flex; padding-top: 1px; }
  .left { width: 200px; } .right { width: 272px; }
  .cols .row { height: 15px; margin-bottom: 1px; }
  .right .row:last-child { margin-top: -1px; }
  .int { grid-template-columns: 56px 106px 12px; } .int .combo { margin-left: 1px; } .int .box { margin: -2px 0 0 1px; }
  .date { grid-template-columns: 56px 106px 34px; } .row.date .white { margin-left: 1px; justify-content: space-between; border-color: #aaa; }
  .time { margin-left: 1px; height: 14px; border-color: #bbb; }
  .cps { margin: 3px 0 0 2px; }
  .ord { grid-template-columns: 62px 196px 12px; } .ord .combo { margin-left: 1px; } .ord .box { margin-top: -2px; }
  .opts { grid-template-columns: 67px 94px 88px 29px 190px; height: 16px; margin-top: -4px; }
  .opts > .check { margin-left: 2px; height: 10px; margin-top: 3px; background: none; } .opts .combo { margin-left: 2px; }
  .descon { margin: 16px 0 0 163px; }
  .nome { grid-template-columns: 56px 412px; margin-top: 2px; height: 15px; }
  .buttons { display: grid; grid-template-columns: repeat(4, 117px); gap: 1.300px; height: 31px; }
  .buttons button { font: 700 9.500px "Liberation Sans", sans-serif; color: #222; background: #e1e1e1; border: 1px solid #b4b4b4; display: flex; align-items: center; justify-content: center; gap: 3px; padding: 0; }
  .buttons .dis { background: #c8c8c8; color: #929292; }

  .alert { position: absolute; left: 531px; top: 211px; width: 246px; height: 87px; background: #fff; border: 1px solid #777; box-shadow: 0 3px 9px rgba(0, 0, 0, .45); display: flex; flex-direction: column; font: 8.500px/10px "Open Sans", sans-serif; color: #222; }
  .atitle { height: 16px; display: flex; align-items: center; justify-content: space-between; padding: 0 5px 0 2px; }
  .abody { height: 42px; display: flex; padding: 8px 0 0 6px; gap: 7px; }
  .abody > div { padding-top: 3px; line-height: 9.500px; }
  .afoot { flex: 1; background: #f0f0f0; display: flex; justify-content: flex-end; align-items: center; padding: 0 6px 1px 0; }
  .ok { width: 46px; height: 15px; border: 2px solid #2c86cf; background: #e1e1e1; font: 8.500px/10px "Open Sans", sans-serif; padding: 0; color: #222; }

  .status { height: 14px; border: solid #aac8d8; border-width: 1px 0; background: #bae6ff; display: flex; justify-content: space-between; align-items: center; padding: 0 2px 1px 2px; font: 9px/12px "Liberation Serif", serif; color: #222; flex: none; }

  .rtask { height: 27px; background: #3b3833; display: flex; flex: none; }
  .rstart { width: 33px; display: flex; justify-content: center; align-items: center; }
  .ico { width: 17px; height: 17px; overflow: visible; }
  .rstart .ico { width: 19px; height: 19px; }
  .search { width: 196px; background: #f2f2f2; display: flex; align-items: center; padding-left: 8px; gap: 8px; font-size: 10px; color: #444; }
  .donkey { margin-left: auto; align-self: flex-end; }
  .rapps { display: flex; }
  .rapp { width: 33.500px; display: flex; align-items: center; justify-content: center; }
  .rapp.run { background: linear-gradient(#76a9d8, #76a9d8) 50% 100% / 27px 2px no-repeat; }
  .rapp.active { background-color: #5d5a57; }
  .rtray { flex: 1; display: flex; align-items: center; color: #eee; font-size: 9.500px; padding-left: 297px; }
  .rtray .weather { margin-right: 5px; }
  .parc { margin-left: 6px; width: 83px; }
  .rtray .tray { display: flex; align-items: center; gap: 5px; width: 50px; }
  .chev { width: 10px; height: 6px; } .net { width: 12px; height: 11px; } .vol { width: 12px; height: 11px; }
  .two-lines { display: flex; flex-direction: column; align-items: center; }
  .rtray .two-lines { font-size: 8.500px; line-height: 12px; }
  .rtray .lang { width: 17px; } .rtray .two-lines.date { width: 40px; margin-left: 7px; }
  .rnotif { margin-left: 12px; } .rnotif .notif { width: 18px; height: 18px; }
  .copilot { margin-left: 9px; }
  .edge { width: 1px; height: 100%; background: #8a8784; margin-left: auto; margin-right: 3px; }

  .htask { height: 42px; background: linear-gradient(90deg, #3a3733 0, #3c3934 45%, #3a322a 78%, #42403d 88%, #3e3d3d 100%); display: flex; flex: none; }
  .happs { display: flex; }
  .happ { width: 51.730px; display: flex; align-items: center; justify-content: center; }
  .happ .ico { width: 25px; height: 25px; }
  .happ.windows .ico { width: 26px; height: 26px; margin-right: 2px; }
  .happ.run { background: linear-gradient(#76addc, #76addc) 50% 100% / 43px 3px no-repeat; }
  .happ.active { background: linear-gradient(#76addc, #76addc) 50% 100% / 51px 3px no-repeat, #64615d; }
  .happ.corel { background: linear-gradient(90deg, #76addc 33px, #3a3733 33px, #3a3733 34px, #5d86aa 34px) 4px 100% / 42px 3px no-repeat; }
  .htray { margin-left: auto; display: flex; align-items: center; color: #eee; }
  .htray .tray { display: flex; align-items: center; gap: 9px; }
  .htray .chev { width: 14px; height: 8px; } .htray .net { width: 18px; height: 16px; } .htray .vol { width: 18px; height: 14px; }
  .htray .two-lines { font-size: 12px; line-height: 19px; }
  .htray .lang { width: 28px; margin-left: 8px; } .htray .date { width: 64px; margin-left: 12px; }
  .hnotif { margin: 6px 0 0 18px; } .hnotif .notif { width: 26px; height: 26px; }
  .htray .edge { margin-left: 12px; }
</style>
